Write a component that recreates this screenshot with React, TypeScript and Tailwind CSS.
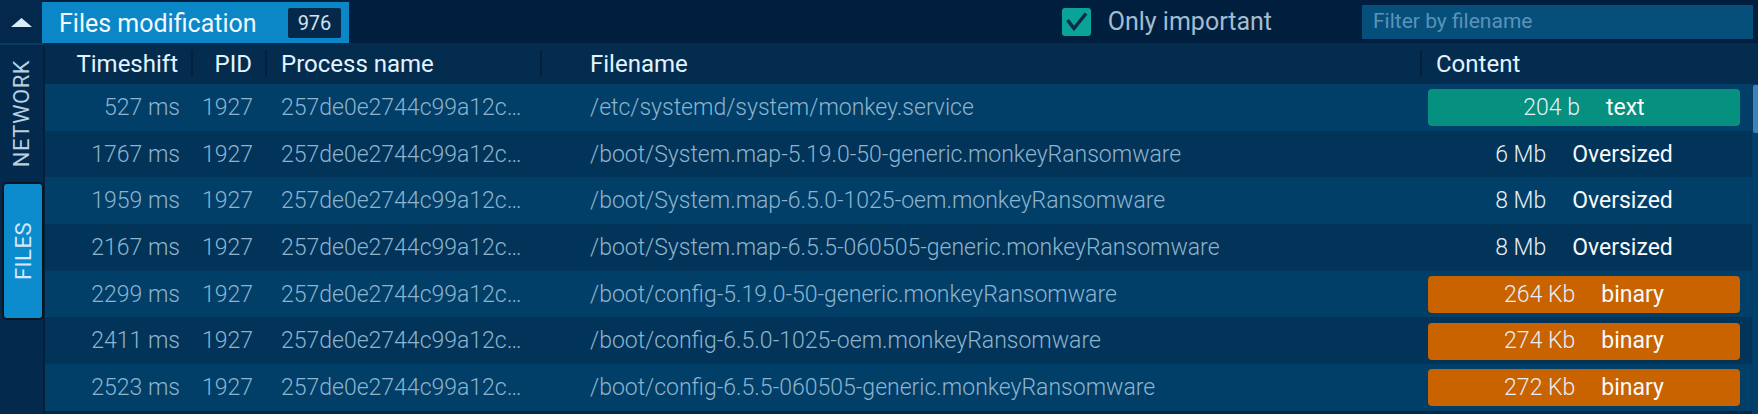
import React from "react";

type Row = {
  shift: string;
  file: string;
  size: string;
  kind: string;
  tone: "text" | "binary" | "none";
};

const rows: Row[] = [
  { shift: "527 ms", file: "/etc/systemd/system/monkey.service", size: "204 b", kind: "text", tone: "text" },
  { shift: "1767 ms", file: "/boot/System.map-5.19.0-50-generic.monkeyRansomware", size: "6 Mb", kind: "Oversized", tone: "none" },
  { shift: "1959 ms", file: "/boot/System.map-6.5.0-1025-oem.monkeyRansomware", size: "8 Mb", kind: "Oversized", tone: "none" },
  { shift: "2167 ms", file: "/boot/System.map-6.5.5-060505-generic.monkeyRansomware", size: "8 Mb", kind: "Oversized", tone: "none" },
  { shift: "2299 ms", file: "/boot/config-5.19.0-50-generic.monkeyRansomware", size: "264 Kb", kind: "binary", tone: "binary" },
  { shift: "2411 ms", file: "/boot/config-6.5.0-1025-oem.monkeyRansomware", size: "274 Kb", kind: "binary", tone: "binary" },
  { shift: "2523 ms", file: "/boot/config-6.5.5-060505-generic.monkeyRansomware", size: "272 Kb", kind: "binary", tone: "binary" },
];

const cols = "grid grid-cols-[148px_74px_275px_880px_330px]";

const Sep = () => <div className="w-[2px] h-[27px] bg-[#01213d] shrink-0" />;

const TopBar = () => (
  <div className="h-[43px] flex items-end bg-[#001f3f] shrink-0">
    <div className="w-[42px] h-[43px] bg-[#03284b] flex items-center justify-center">
      <svg width="42" height="43" viewBox="0 0 42 43">
        <polygon points="11,27 21.5,18 32,27" fill="#d9edf9" />
      </svg>
    </div>
    <div className="w-[307px] h-[41px] bg-[#0b87c7] flex items-center pl-[17px] pr-[8px]">
      <span className="text-[25px] text-[#f2f9ff] leading-none pt-[1px]">Files modification</span>
      <span className="ml-auto w-[53px] h-[30px] bg-[#05294a] rounded-[2px] flex items-center justify-center text-[20px] text-[#cfe2ef]">
        976
      </span>
    </div>
    <div className="ml-auto h-[43px] flex items-center">
      <div className="w-[29px] h-[28px] rounded-[3px] bg-[#0aa39a] flex items-center justify-center">
        <svg width="29" height="28" viewBox="0 0 29 28">
          <polyline points="5.5,12 12,20.5 24,5.5" fill="none" stroke="#0c2b44" strokeWidth="3.5" />
        </svg>
      </div>
      <span className="ml-[17px] text-[25px] text-[#a3bccf]">Only important</span>
      <div className="ml-[90px] mr-[5px] w-[391px] h-[34px] bg-[#064f7b] flex items-center pl-[11px]">
        <span className="text-[21px] text-[#5a93b8]">Filter by filename</span>
      </div>
    </div>
  </div>
);

const Sidebar = () => (
  <div className="w-[45px] shrink-0 bg-[#032a4c] border-t-2 border-r-2 border-t-[#0b3a62] border-r-[#01203c] flex flex-col">
    <div className="h-[137px] flex items-center justify-center">
      <span className="[writing-mode:vertical-rl] rotate-180 text-[22px] text-[#b9d0e0] tracking-[0.5px]">NETWORK</span>
    </div>
    <div className="ml-[2px] w-[42px] h-[138px] border-2 border-[#0a1520] rounded-[5px] bg-[#0d8ccd] flex items-center justify-center">
      <span className="[writing-mode:vertical-rl] rotate-180 text-[22px] text-[#d3e9f7] tracking-[0.5px]">FILES</span>
    </div>
  </div>
);

const Header = () => (
  <div className={`${cols} h-[41px] bg-[#032c4f] text-[24px] text-[#e3f4ff]`}>
    <div className="flex items-center justify-end">
      <span className="mr-[13px]">Timeshift</span>
      <Sep />
    </div>
    <div className="flex items-center justify-end">
      <span className="mr-[13px]">PID</span>
      <Sep />
    </div>
    <div className="flex items-center">
      <span className="ml-[14px]">Process name</span>
      <div className="ml-auto">
        <Sep />
      </div>
    </div>
    <div className="flex items-center">
      <span className="ml-[48px]">Filename</span>
      <div className="ml-auto">
        <Sep />
      </div>
    </div>
    <div className="flex items-center">
      <span className="ml-[14px]">Content</span>
    </div>
  </div>
);

const Content = ({ row }: { row: Row }) => {
  const bg = row.tone === "text" ? "bg-[#05907f]" : row.tone === "binary" ? "bg-[#c86300]" : "";
  return (
    <div className="flex items-center h-full pl-[6px] pr-[12px] pt-[1px]">
      <div className={`w-full h-[37px] rounded-[4px] flex items-center justify-center gap-[26px] pt-[1px] ${bg}`}>
        <span className="font-light text-[#e8eff5]">{row.size}</span>
        <span className="font-normal text-[#f7fafc]">{row.kind}</span>
      </div>
    </div>
  );
};

const Table = () => (
  <div className="flex-1 flex flex-col">
    <Header />
    <div className="flex flex-1 bg-[#013f69]">
      <div className="w-[1707px] flex flex-col">
        {rows.map((row, i) => (
          <div
            key={row.shift}
            className={`${cols} h-[46.67px] text-[23px] font-light text-[#8db3cd] ${i % 2 ? "bg-[#02345a]" : "bg-[#013f69]"}`}
          >
            <div className="flex items-center justify-end pr-[13px] pt-[2px]">{row.shift}</div>
            <div className="flex items-center justify-end pr-[14px] pt-[2px]">1927</div>
            <div className="flex items-center pl-[14px] pt-[2px] whitespace-nowrap">257de0e2744c99a12c…</div>
            <div className="flex items-center pl-[48px] pt-[2px] whitespace-nowrap">{row.file}</div>
            <Content row={row} />
          </div>
        ))}
        <div className="flex-1 bg-[#02294a]" />
      </div>
      <div className="w-[6px] pt-[1px]">
        <div className="h-[48px] w-[5px] ml-[1px] rounded-l-[2px] bg-[#3f80b8]" />
      </div>
    </div>
  </div>
);

export default function App() {
  return (
    <div className="w-[1758px] h-[414px] overflow-hidden flex flex-col bg-[#02294a] [font-family:Roboto,sans-serif]">
      <TopBar />
      <div className="flex flex-1 min-h-0">
        <Sidebar />
        <Table />
      </div>
    </div>
  );
}
